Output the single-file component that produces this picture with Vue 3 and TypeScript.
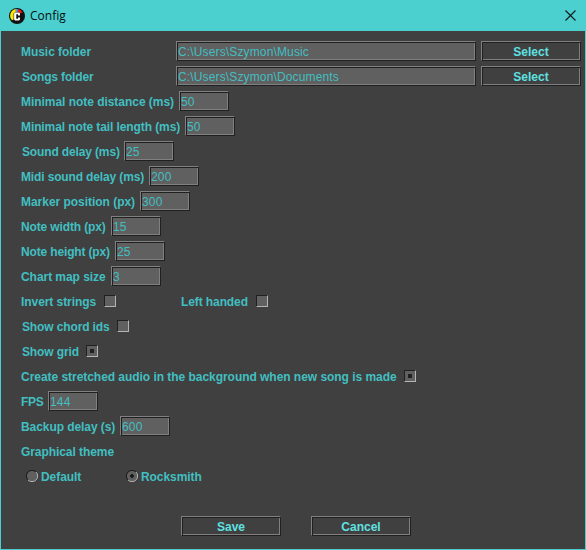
<script setup lang="ts">
import { reactive, ref } from 'vue'

interface InputRow { label: string; width: number; tracking: number; value: string }
interface CheckItem { label: string; width: number; tracking: number; checked: boolean }

const folders = reactive<InputRow[]>([
  { label: 'Music folder', width: 155, tracking: -0.05, value: 'C:\\Users\\Szymon\\Music' },
  { label: 'Songs folder', width: 154, tracking: -0.16, value: 'C:\\Users\\Szymon\\Documents' },
])

const numbers = reactive<InputRow[]>([
  { label: 'Minimal note distance (ms)', width: 158, tracking: -0.04, value: '50' },
  { label: 'Minimal note tail length (ms)', width: 164, tracking: -0.1, value: '50' },
  { label: 'Sound delay (ms)', width: 102, tracking: -0.14, value: '25' },
  { label: 'Midi sound delay (ms)', width: 128, tracking: -0.14, value: '200' },
  { label: 'Marker position (px)', width: 119, tracking: -0.03, value: '300' },
  { label: 'Note width (px)', width: 90, tracking: -0.13, value: '15' },
  { label: 'Note height (px)', width: 94, tracking: -0.15, value: '25' },
  { label: 'Chart map size', width: 90, tracking: -0.05, value: '3' },
])

const checks = reactive<CheckItem[][]>([
  [
    { label: 'Invert strings', width: 83, tracking: -0.07, checked: false },
    { label: 'Left handed', width: 75, tracking: -0.1, checked: false },
  ],
  [{ label: 'Show chord ids', width: 95, tracking: -0.13, checked: false }],
  [{ label: 'Show grid', width: 64, tracking: -0.13, checked: true }],
  [{ label: 'Create stretched audio in the background when new song is made', width: 383, tracking: -0.04, checked: true }],
])

const timings = reactive<InputRow[]>([
  { label: 'FPS', width: 27, tracking: -0.25, value: '144' },
  { label: 'Backup delay (s)', width: 99, tracking: -0.07, value: '600' },
])

const themes = ['Default', 'Rocksmith']
const theme = ref('Rocksmith')

const labelStyle = (item: { width: number; tracking: number }) => ({
  width: `${item.width}px`,
  letterSpacing: `${item.tracking}px`,
})
</script>

<template>
  <div class="window">
    <header class="titlebar">
      <svg class="logo" width="16" height="16" viewBox="0 0 16 16">
        <circle cx="8" cy="8" r="8" fill="#111" />
        <path d="M3 12.2A6.6 6.6 0 0 1 6.8 1.1V4L4.6 5.2V11.4Z" fill="#ffe60a" />
        <path d="M6.9 1H8.8V4H6.9Z" fill="#4aa5ef" />
        <path d="M8.8 1.1A6.8 6.8 0 0 1 13.6 4.4L11.6 5.2L8.8 4Z" fill="#f01818" />
        <path d="M6 4.6H10L11 5.6V7.4H9V6.3H7.3V10.7H9V9.6H11V11.4L10 12.4H6L5.1 11.4V5.6Z" fill="#fff" />
      </svg>
      <span class="title">Config</span>
      <svg class="close" width="11" height="11" viewBox="0 0 11 11">
        <path d="M.5 .5L10.5 10.5M10.5 .5L.5 10.5" stroke="#101818" stroke-width="1.1" />
      </svg>
    </header>

    <main class="form">
      <div v-for="f in folders" :key="f.label" class="row" :class="{ inset: f.label.startsWith('S') }">
        <span class="label" :style="labelStyle(f)">{{ f.label }}</span>
        <input v-model="f.value" class="field wide" type="text" />
        <button class="button">Select</button>
      </div>

      <div v-for="n in numbers" :key="n.label" class="row" :class="{ inset: n.label.startsWith('S') }">
        <span class="label" :style="labelStyle(n)">{{ n.label }}</span>
        <input v-model="n.value" class="field" type="text" />
      </div>

      <div v-for="(group, i) in checks" :key="i" class="row" :class="{ inset: group[0].label.startsWith('S') }">
        <label v-for="c in group" :key="c.label" class="cell">
          <span class="label" :style="labelStyle(c)">{{ c.label }}</span>
          <span class="check" :class="{ on: c.checked }" @click="c.checked = !c.checked"></span>
        </label>
      </div>

      <div v-for="n in timings" :key="n.label" class="row">
        <span class="label" :style="labelStyle(n)">{{ n.label }}</span>
        <input v-model="n.value" class="field" type="text" />
      </div>

      <div class="row"><span class="label">Graphical theme</span></div>

      <div class="row themes">
        <span v-for="t in themes" :key="t" class="theme" @click="theme = t">
          <svg class="radio" width="12" height="12" viewBox="0 0 12 12">
            <circle cx="6" cy="6" r="5.2" fill="#606060" />
            <path d="M2 10A5.5 5.5 0 0 1 10 2" fill="none" stroke="#1c1c1c" stroke-width="1" />
            <path d="M10 2A5.5 5.5 0 0 1 2 10" fill="none" stroke="#b4b4b4" stroke-width="1" />
            <path v-if="theme === t" d="M5 4H7V5H8V7H7V8H5V7H4V5H5Z" fill="#1c1c1c" />
          </svg>
          <span class="label">{{ t }}</span>
        </span>
      </div>
    </main>

    <footer class="actions">
      <button class="button">Save</button>
      <button class="button">Cancel</button>
    </footer>
  </div>
</template>

<style>
body {
  margin: 0;
  overflow: hidden;
}
</style>

<style scoped>
.window {
  box-sizing: border-box;
  width: 586px;
  height: 550px;
  border: 1px solid #4bcfcf;
  border-top: 0;
  background: #404040;
  font-family: "Liberation Sans", Arial, sans-serif;
  font-size: 12px;
}
.titlebar {
  display: flex;
  align-items: center;
  box-sizing: border-box;
  height: 31px;
  padding: 0 9px 0 8px;
  background: #4bcfcf;
}
.title {
  margin-left: 5px;
  font-family: "Open Sans", "Noto Sans", sans-serif;
  font-size: 12px;
  line-height: 16px;
  color: #081010;
}
.close {
  margin-left: auto;
}
.form {
  padding: 8px 0 0 20px;
}
.row {
  display: flex;
  align-items: center;
  height: 24px;
  margin-bottom: 1px;
}
.inset {
  padding-left: 1px;
}
.label {
  display: block;
  padding-top: 2px;
  font-weight: bold;
  line-height: 16px;
  letter-spacing: -0.07px;
  white-space: nowrap;
  color: #42bfc1;
}
.field {
  box-sizing: border-box;
  width: 50px;
  height: 20px;
  margin: 0;
  padding: 1px 1px 0;
  border: 1px solid;
  border-color: #808080 #202020 #202020 #808080;
  border-radius: 0;
  outline: none;
  background: #606060;
  box-shadow: inset 1px 1px #202020, inset -1px -1px #808080;
  font: 12px "Liberation Sans", Arial, sans-serif;
  letter-spacing: 0.14px;
  color: #42bfc1;
}
.wide {
  width: 300px;
  margin-right: 5px;
}
.button {
  box-sizing: border-box;
  width: 100px;
  height: 20px;
  margin: 0;
  padding: 1px 0 0;
  border: 1px solid;
  border-color: #808080 #202020 #202020 #808080;
  border-radius: 0;
  background: #404040;
  box-shadow: inset 1px 1px #202020, inset -1px -1px #808080;
  font: bold 12px/16px "Liberation Sans", Arial, sans-serif;
  color: #5fe0e0;
}
.cell {
  display: flex;
  align-items: center;
  width: 160px;
}
.cell:only-child {
  width: auto;
}
.check {
  display: flex;
  align-items: center;
  justify-content: center;
  box-sizing: border-box;
  width: 12px;
  height: 12px;
  border: 1px solid;
  border-color: #202020 #b4b4b4 #b4b4b4 #202020;
  background: #606060;
}
.check.on::after {
  content: "";
  width: 4px;
  height: 4px;
  background: #202020;
}
.themes {
  padding-left: 5px;
}
.theme {
  display: flex;
  align-items: center;
  gap: 3px;
  width: 100px;
}
.actions {
  display: flex;
  gap: 30px;
  padding: 27px 0 0 180px;
}
</style>
